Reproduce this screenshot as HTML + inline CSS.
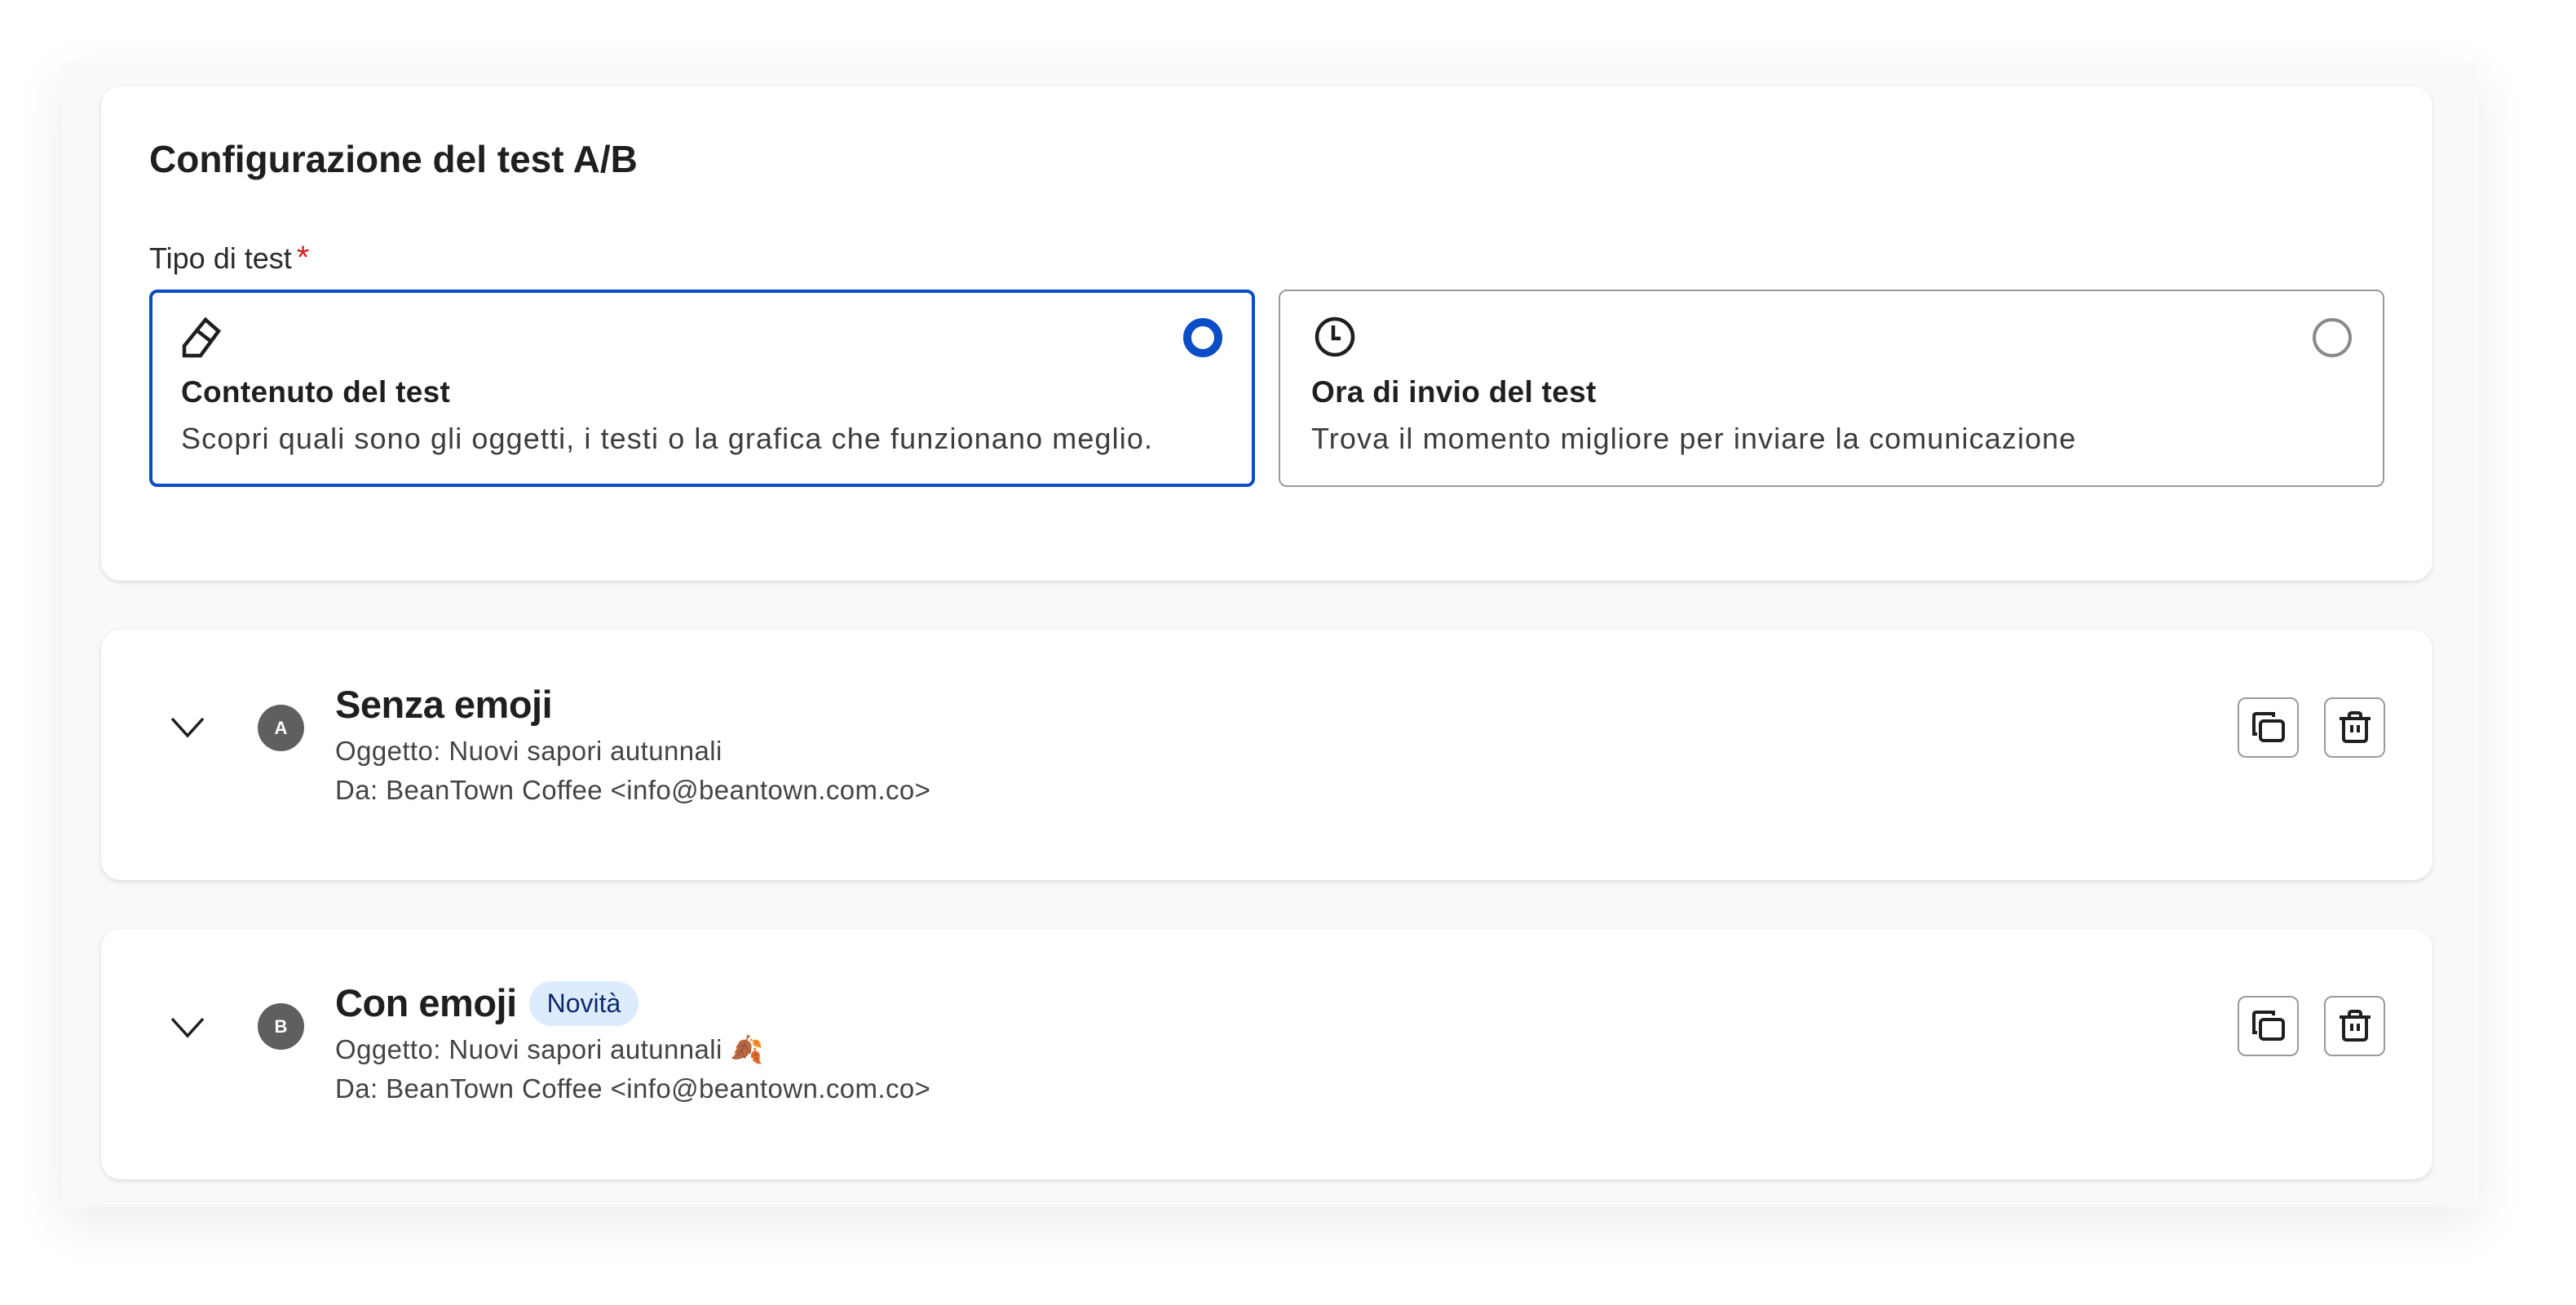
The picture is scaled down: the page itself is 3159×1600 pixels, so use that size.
<!DOCTYPE html>
<html><head><meta charset="utf-8"><style>
*{margin:0;padding:0;box-sizing:border-box}
body{width:3159px;height:1600px;background:#fff;font-family:"Liberation Sans",sans-serif;position:relative;overflow:hidden;color:#1f1f1f}
.abs{position:absolute}
.panel{left:76px;top:77px;width:2963px;height:1403px;background:#f8f9fa;box-shadow:0 20px 60px rgba(0,0,0,0.08)}
.card{background:#fff;border-radius:24px;box-shadow:0 2px 6px rgba(0,0,0,0.12)}
.opt{border-radius:10px;background:#fff}
.t{white-space:nowrap}
.btn{width:75px;height:74px;border:2px solid #9a9a9a;border-radius:10px;background:#fff;display:flex;align-items:center;justify-content:center}
.av{width:57px;height:57px;border-radius:50%;background:#5f5f5f;color:#fff;font-weight:bold;font-size:22px;display:flex;align-items:center;justify-content:center}
.sub{font-size:33px;color:#444;letter-spacing:0.4px}
.desc{font-size:36px;color:#3c3c3c;letter-spacing:1.1px}
</style></head><body>
<div class="abs panel"></div>

<div class="abs card" style="left:124px;top:106px;width:2859px;height:606px"></div>
<div class="abs t" style="left:183px;top:168px;font-size:46px;font-weight:bold;letter-spacing:0">Configurazione del test A/B</div>
<div class="abs t" style="left:183px;top:294px;font-size:36px;color:#2a2a2a">Tipo di test<span style="color:#d01f1f;font-size:40px;margin-left:6px">*</span></div>

<div class="abs opt" style="left:183px;top:355px;width:1356px;height:242px;border:4px solid #0b4cc7"></div>
<svg class="abs" style="left:222px;top:388px" width="54" height="52" viewBox="0 0 54 52"><path d="M30 4 L46 18 L24 48 L4 48 L4 36 Z M18 16 L36 30" fill="none" stroke="#1f1f1f" stroke-width="4.5" stroke-linejoin="miter"/></svg>
<div class="abs" style="left:1451px;top:390px;width:48px;height:48px;border-radius:50%;border:10px solid #0b4cc7;background:#fff"></div>
<div class="abs t" style="left:222px;top:460px;font-size:37px;font-weight:bold;letter-spacing:0.3px">Contenuto del test</div>
<div class="abs t desc" style="left:222px;top:517px">Scopri quali sono gli oggetti, i testi o la grafica che funzionano meglio.</div>

<div class="abs opt" style="left:1568px;top:355px;width:1356px;height:242px;border:2px solid #9a9a9a"></div>
<svg class="abs" style="left:1610px;top:386px" width="54" height="54" viewBox="0 0 54 54"><circle cx="27" cy="27" r="22" fill="none" stroke="#1f1f1f" stroke-width="4.5"/><path d="M25 13 V29 H34" fill="none" stroke="#1f1f1f" stroke-width="4.5"/></svg>
<div class="abs" style="left:2836px;top:390px;width:48px;height:48px;border-radius:50%;border:4px solid #8a8a8a;background:#fff"></div>
<div class="abs t" style="left:1608px;top:460px;font-size:37px;font-weight:bold;letter-spacing:0.3px">Ora di invio del test</div>
<div class="abs t desc" style="left:1608px;top:517px">Trova il momento migliore per inviare la comunicazione</div>

<!-- Card A -->
<div class="abs card" style="left:124px;top:772px;width:2859px;height:307px"></div>
<svg class="abs" style="left:209px;top:878px" width="42" height="28" viewBox="0 0 42 28"><path d="M2 3 L21 24 L40 3" fill="none" stroke="#1f1f1f" stroke-width="3.5"/></svg>
<div class="abs av" style="left:316px;top:864px">A</div>
<div class="abs t" style="left:411px;top:836px;font-size:47px;font-weight:bold;letter-spacing:-0.5px">Senza emoji</div>
<div class="abs t sub" style="left:411px;top:902px">Oggetto: Nuovi sapori autunnali</div>
<div class="abs t sub" style="left:411px;top:950px">Da: BeanTown Coffee &lt;info@beantown.com.co&gt;</div>
<div class="abs btn" style="left:2744px;top:855px"><svg width="44" height="40" viewBox="0 0 44 40"><path d="M8 28 H4 V6 Q4 3 7 3 H28 V7" fill="none" stroke="#1f1f1f" stroke-width="4"/><rect x="12" y="12" width="28" height="24" rx="4" fill="none" stroke="#1f1f1f" stroke-width="4"/></svg></div>
<div class="abs btn" style="left:2850px;top:855px"><svg width="42" height="40" viewBox="0 0 42 40"><path d="M2 9 H40 M14 9 V5 Q14 2 17 2 H25 Q28 2 28 5 V9 M7 9 V33 Q7 37 11 37 H31 Q35 37 35 33 V9 M17 17 V26 M25 17 V26" fill="none" stroke="#1f1f1f" stroke-width="4"/></svg></div>

<!-- Card B -->
<div class="abs card" style="left:124px;top:1139px;width:2859px;height:307px"></div>
<svg class="abs" style="left:209px;top:1246px" width="42" height="28" viewBox="0 0 42 28"><path d="M2 3 L21 24 L40 3" fill="none" stroke="#1f1f1f" stroke-width="3.5"/></svg>
<div class="abs av" style="left:316px;top:1230px">B</div>
<div class="abs t" style="left:411px;top:1202px;font-size:47px;font-weight:bold;letter-spacing:-0.5px">Con emoji</div>
<div class="abs t" style="left:649px;top:1203px;width:134px;height:55px;border-radius:28px;background:#dcecfc;color:#0e2a6e;font-size:32px;display:flex;align-items:center;justify-content:center">Novità</div>
<div class="abs t sub" style="left:411px;top:1268px">Oggetto: Nuovi sapori autunnali <span style="color:#c0621a">🍂</span></div>
<div class="abs t sub" style="left:411px;top:1316px">Da: BeanTown Coffee &lt;info@beantown.com.co&gt;</div>
<div class="abs btn" style="left:2744px;top:1221px"><svg width="44" height="40" viewBox="0 0 44 40"><path d="M8 28 H4 V6 Q4 3 7 3 H28 V7" fill="none" stroke="#1f1f1f" stroke-width="4"/><rect x="12" y="12" width="28" height="24" rx="4" fill="none" stroke="#1f1f1f" stroke-width="4"/></svg></div>
<div class="abs btn" style="left:2850px;top:1221px"><svg width="42" height="40" viewBox="0 0 42 40"><path d="M2 9 H40 M14 9 V5 Q14 2 17 2 H25 Q28 2 28 5 V9 M7 9 V33 Q7 37 11 37 H31 Q35 37 35 33 V9 M17 17 V26 M25 17 V26" fill="none" stroke="#1f1f1f" stroke-width="4"/></svg></div>
</body></html>
